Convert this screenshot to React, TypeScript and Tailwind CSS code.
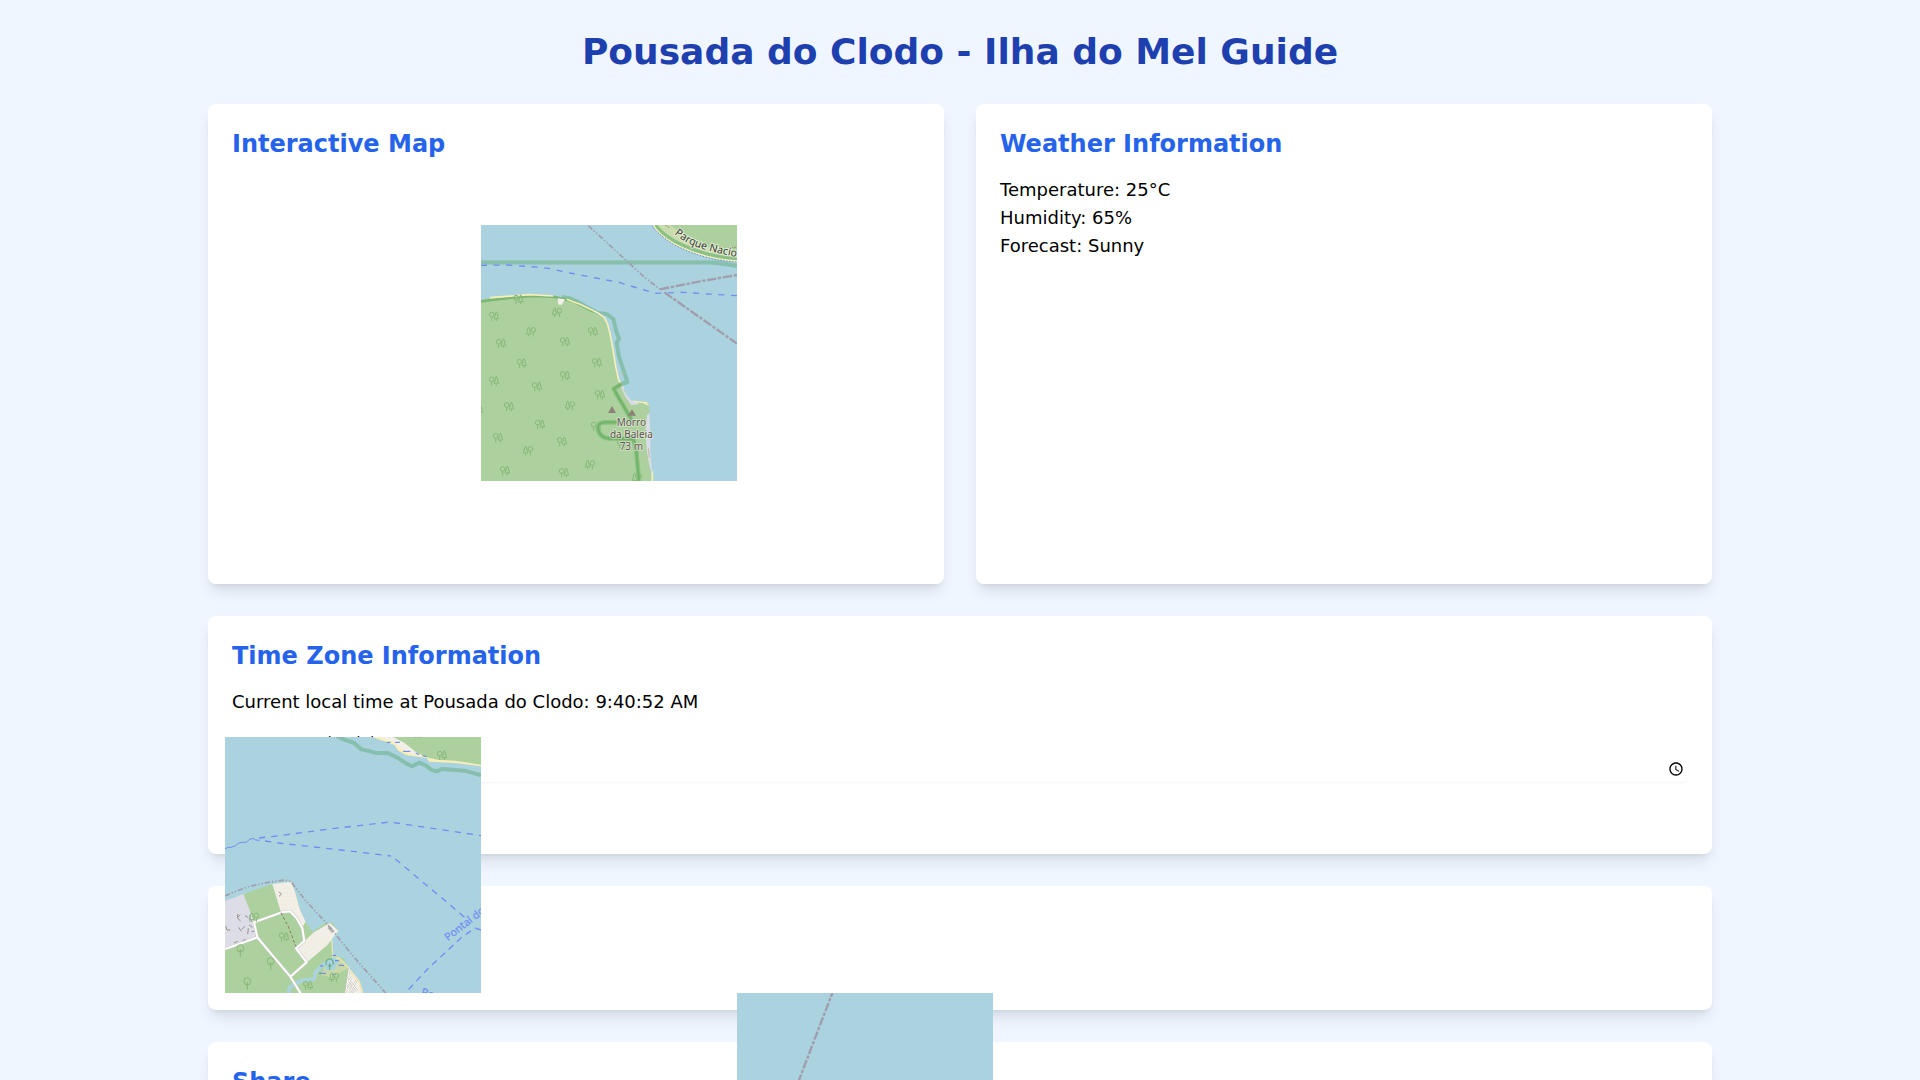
import type { ReactNode } from "react";

const headingClass = "text-2xl font-bold text-[#2563eb]";
const cardClass = "rounded-lg bg-white p-6 shadow-lg";

function Trees({ at, flip = false }: { at: [number, number][]; flip?: boolean }) {
  return (
    <g fill="none" stroke="#87b878" strokeWidth="3" strokeLinejoin="round">
      {at.map(([x, y]) => (
        <g key={`${x}-${y}`} transform={`translate(${x} ${y}) scale(${flip ? -1 : 1} 1)`}>
          <circle cx="-7" cy="-4" r="7" />
          <path d="M-7 3V15M7 -13L2 -3H4L0 8H14L10 -3H12ZM7 8V15" />
        </g>
      ))}
    </g>
  );
}

function RoundTrees({ at }: { at: [number, number][] }) {
  return (
    <g fill="none" stroke="#87b878" strokeWidth="3">
      {at.map(([x, y]) => (
        <path key={`${x}-${y}`} d={`M${x} ${y + 22}V${y - 2}M${x - 5} ${y + 5}H${x + 5}M${x - 10} ${y - 4}a10 11 0 1 0 20 0a10 11 0 1 0 -20 0`} />
      ))}
    </g>
  );
}

function Tile({ viewBox, className, children }: { viewBox: string; className: string; children: ReactNode }) {
  return (
    <svg
      viewBox={viewBox}
      aria-hidden="true"
      className={`absolute z-10 h-64 w-64 max-w-none overflow-hidden bg-[#aad3df] ${className}`}
      fontFamily="'Noto Sans', sans-serif"
    >
      {children}
    </svg>
  );
}

function HeadlandTile() {
  const coast =
    "M33 255L60 249L140 242L180 239L250 243L290 252L330 268L380 292L402 306L412 325L420 355L430 410L437 455L446 495L460 522L478 552L490 558L530 560L538 572L538 600L531 612L530 650L538 700L540 760L548 798";
  return (
    <Tile viewBox="33 30 768 768" className="left-[249px] top-[49px]">
      <path d={`${coast}H33Z`} fill="#add19e" />
      <path d="M33 142H720Q760 144 801 153" fill="none" stroke="#86bfae" strokeWidth="13" />
      <path d="M33 137H760" stroke="#9bcabe" strokeWidth="3" strokeDasharray="3 3" />
      <path
        d="M275 246L300 250L330 264L350 276L385 294L410 297L430 312L438 345L447 372L440 383L447 425L457 455L472 501L450 509"
        fill="none"
        stroke="#86bfae"
        strokeWidth="12"
        strokeLinejoin="round"
      />
      <path d="M33 259L90 252L140 246L200 243L255 246L310 259L370 290" fill="none" stroke="#7cb872" strokeWidth="8" />
      <path d="M60 248L140 242L180 239L250 243M290 253L330 268L380 292L402 306L412 325L420 355L430 410L437 455L446 495L460 522" fill="none" stroke="#f7eeb9" strokeWidth="5" />
      <path d="M263 250L285 253L275 269H265Z" fill="#f2efe9" />
      <path d="M456 508L464 530L482 555L505 560L505 568L484 571L466 545L452 515Z" fill="#d9dae6" />
      <path d="M490 557L530 561L537 573L520 565L490 561Z" fill="#f7eeb9" />
      <path d="M531 600L538 595L541 650L541 710L545 760L549 772L546 774L538 750L530 705L527 645Z" fill="#dcdce6" />
      <path d="M452 478L467 475M535 700L538 728" stroke="#c0b9a0" strokeWidth="3" />
      <path d="M547 770V798" stroke="#f7eeb9" strokeWidth="5" />
      <Trees
        at={[
          [72, 303], [93, 384], [285, 379], [369, 349], [145, 252], [155, 444], [381, 442], [72, 497],
          [285, 481], [201, 514], [390, 538], [117, 574], [210, 627], [84, 667], [276, 679], [105, 766],
          [282, 772], [378, 633], [456, 685], [24, 584],
        ]}
      />
      <Trees flip at={[[183, 349], [261, 291], [300, 571], [174, 706], [360, 748], [501, 788]]} />
      <g fill="none" strokeLinejoin="round">
        <g stroke="#8fc283" strokeWidth="14">
          <path d="M455 507L431 521L440 538L474 596L486 617" />
          <path d="M440 622H405Q382 622 384 642Q390 671 425 671L490 672L499 710L507 798" />
        </g>
        <g stroke="#70b569" strokeWidth="7">
          <path d="M455 507L431 521L440 538L474 596L486 617" />
          <path d="M440 622H405Q382 622 384 642Q390 671 425 671L490 672L499 710L507 798" />
        </g>
      </g>
      <path d="M426 573L438 594H414ZM486 583L498 602H474Z" fill="#8d8178" />
      <g fontSize="30" textAnchor="middle" fill="#5e554d" stroke="#e4eadb" strokeWidth="5" strokeOpacity=".8" paintOrder="stroke">
        <text x="484" y="634">Morro</text>
        <text x="484" y="670">da Baleia</text>
        <text x="484" y="706">73 m</text>
      </g>
      <path d="M548 30Q560 52 610 84Q700 132 801 140V30Z" fill="#c9dcad" />
      <path d="M600 30L640 58L700 90L801 115V30Z" fill="#add19e" />
      <path d="M556 30Q580 65 640 92Q720 128 801 131" fill="none" stroke="#8bc185" strokeWidth="11" />
      <path d="M550 30Q562 55 612 86Q700 132 801 138" fill="none" stroke="#f7eeb9" strokeWidth="4" />
      <path d="M547 33Q560 55 610 88Q700 136 801 141" fill="none" stroke="#4d65c4" strokeWidth="3" strokeDasharray="3 6" />
      <path d="M585 30L600 39M775 98L801 97" stroke="#9b9072" strokeWidth="3" strokeDasharray="6 3" />
      <path id="park-label" d="M613 57Q655 92 712 106Q770 122 850 134" fill="none" />
      <text fontSize="32" fill="#34412f" stroke="#e9efdf" strokeWidth="6" strokeOpacity=".8" paintOrder="stroke">
        <textPath href="#park-label">Parque Nacion</textPath>
      </text>
      <g fill="none" stroke="#6f8df0" strokeWidth="4">
        <path d="M33 151L110 150L210 157L240 161L300 174L450 203L555 235L640 232L700 236L801 242" strokeDasharray="18 20" />
      </g>
      <g fill="none" stroke="#a19dad">
        <path d="M355 32L525 188L573 225" strokeWidth="5" strokeDasharray="16 6 4 6 4 6" />
        <path d="M570 223L690 199L801 180M583 232L801 386" strokeWidth="7" strokeDasharray="28 5 10 5" />
      </g>
    </Tile>
  );
}

function HarborTile() {
  return (
    <Tile viewBox="30 21 768 768" className="-left-[7px] top-[561px]">
      <path d="M470 21L515 36L538 45L550 62L575 76L635 84L642 95L720 99L798 109V21Z" fill="#f7eeb9" />
      <path d="M495 21L540 38L555 54L590 73L640 80V21Z" fill="#f2efe9" />
      <path d="M535 21L570 40L605 68L640 83L668 89L720 92L798 104V21Z" fill="#add19e" />
      <path
        d="M365 18L390 30L415 38L440 58L480 68L520 70L550 85L575 101L592 109L612 98L632 106L650 120L667 124L680 117L750 122L798 136"
        fill="none"
        stroke="#86bfae"
        strokeWidth="12"
        strokeLinejoin="round"
      />
      <path d="M515 37H527M540 37H555M564 64H586M602 70L612 73M622 77L635 80" stroke="#5f7de8" strokeWidth="3" />
      <path d="M598 22H604M610 22H615" stroke="#8fbf80" strokeWidth="3" />
      <Trees at={[[681, 75]]} />
      <g fill="none" stroke="#6f8df5" strokeWidth="4">
        <path d="M30 356L40 352L48 352L62 347L70 340L80 337L94 337L104 328L114 325L122 330L133 331" strokeWidth="3" />
        <path d="M132 324L200 316L360 295L525 276L610 289L700 302L798 317" strokeDasharray="19 18" />
        <path d="M150 333L190 339L360 358L528 378" strokeDasharray="19 18" />
        <path d="M541 387L612 447L700 520L760 572" strokeDasharray="19 17" />
        <path d="M798 600L780 594L740 622L640 715L568 792" strokeDasharray="19 15" />
      </g>
      <g transform="translate(0 390)">
        <path
          d="M30 122L60 112L85 102L172 72L228 65L240 95L255 150L272 185L292 215L330 190L352 188L370 212L350 235L355 285L385 295L403 325L430 360L445 400H30Z"
          fill="#add19e"
        />
        <path d="M30 122L60 112L85 102L118 187L127 232L30 264Z" fill="#dddde8" />
        <path d="M172 72L228 65L240 95L255 150L272 185L262 202L242 166L225 152L198 157Z" fill="#f2efe9" />
        <path d="M243 265L269 243L297 217L345 189L370 212L337 255L278 305Z" fill="#f2efe9" />
        <g fill="none" stroke="#efe6bb" strokeWidth="3" strokeDasharray="3 8">
          <path d="M186 85H232M193 97H236M192 109H240M195 121H244M201 133H248M205 145H250M248 167L262 185" />
          <path d="M262 260L335 208M258 272L345 218M266 282L345 230M275 292L340 244" />
        </g>
        <path d="M355 290L372 292L402 324L350 352L318 345L330 318Z" fill="#c9d8a8" />
        <path d="M350 240L354 292L372 294L402 324" fill="none" stroke="#e9e4b5" strokeWidth="4" />
        <path d="M403 325L430 358L443 400H390Z" fill="#f2efe9" />
        <path d="M405 335L432 366L442 398" fill="none" stroke="#f1e7b7" strokeWidth="6" />
        <path d="M220 400L224 382L258 362L298 358L302 335L330 310L355 300" fill="none" stroke="#aad3df" strokeWidth="11" strokeLinejoin="round" />
        <path d="M335 305L355 290L372 302L358 330L330 332Z" fill="#aad3df" />
        <path d="M353 286H363M360 302H372M315 318H325M371 316H387M352 343H362M312 340H333" stroke="#5f7de8" strokeWidth="3" />
        <g fill="none" strokeLinejoin="round">
          <g stroke="#c9c9c4" strokeWidth="9">
            <path d="M30 267L127 232L117 187L200 157L226 154L245 175L262 205L268 243L243 265L275 307L226 350" />
            <path d="M127 232L226 350L257 400" />
          </g>
          <g stroke="#fff" strokeWidth="6">
            <path d="M30 267L127 232L117 187L200 157L226 154L245 175L262 205L268 243L243 265L275 307L226 350" />
            <path d="M127 232L226 350L257 400" />
          </g>
        </g>
        <path d="M403 325L392 400M400 360L426 392M410 350L398 374M425 360L404 398M402 377L416 398" fill="none" stroke="#c4c1ba" strokeWidth="6" />
        <path d="M403 325L392 400M400 360L426 392M410 350L398 374M425 360L404 398M402 377L416 398" fill="none" stroke="#fff" strokeWidth="3" />
        <path d="M198 158L220 200L243 260" fill="none" stroke="#857b66" strokeWidth="3" strokeDasharray="9 6" />
        <path
          d="M32 198L36 210H46M68 162V174L77 184M68 172L76 164M90 167L100 173M105 165V185M71 202L79 214M80 208L90 199M100 205L98 222M110 215L118 213M57 249L68 244M83 242L92 238M102 195L113 202M192 95L199 103L192 109"
          fill="none"
          stroke="#9b9388"
          strokeWidth="3"
        />
        <path d="M341 201L354 216" stroke="#b9b7b1" strokeWidth="10" />
        <path d="M30 108L60 95L100 80L160 67L210 60L228 65L270 120L335 190L420 295L512 399" fill="none" stroke="#a19dad" strokeWidth="5" strokeDasharray="16 6 4 6 4 6" />
        <Trees at={[[207, 230], [279, 375]]} />
        <Trees flip at={[[357, 351], [117, 171]]} />
        <RoundTrees at={[[76, 269], [167, 308], [97, 368]]} />
        <path d="M344 330V310M338 318H350M334 315a11 13 0 1 1 20 0" fill="none" stroke="#70b08a" strokeWidth="4" />
        <g fontSize="32" fill="#6f8df5" stroke="#6f8df5" strokeWidth="0.6">
          <text transform="translate(699 244) rotate(-38)">Pontal do</text>
          <text transform="translate(617 406) rotate(14)">Pontal</text>
        </g>
      </g>
    </Tile>
  );
}

function OpenSeaTile() {
  return (
    <Tile viewBox="51 39 768 768" className="left-[505px] top-[817px]">
      <path d="M337 39L237 300L150 530" fill="none" stroke="#a19dad" strokeWidth="7" strokeDasharray="26 5 10 5" strokeDashoffset="14" />
    </Tile>
  );
}

export default function App() {
  return (
    <div className="min-h-screen bg-[#eff6ff] font-['DejaVu_Sans',sans-serif] text-black">
      <main className="mx-auto max-w-screen-2xl px-4 py-8">
        <h1 className="mb-8 text-center text-4xl font-bold text-[#1e40af]">Pousada do Clodo - Ilha do Mel Guide</h1>
        <div className="grid grid-cols-1 gap-8 md:grid-cols-2">
          <section className={cardClass}>
            <h2 className={`mb-4 ${headingClass}`}>Interactive Map</h2>
            <div className="relative h-96">
              <HeadlandTile />
              <HarborTile />
              <OpenSeaTile />
            </div>
          </section>
          <section className={cardClass}>
            <h2 className={`mb-4 ${headingClass}`}>Weather Information</h2>
            <div className="text-lg">
              <p>Temperature: 25°C</p>
              <p>Humidity: 65%</p>
              <p>Forecast: Sunny</p>
            </div>
          </section>
        </div>
        <section className={`mt-8 ${cardClass}`}>
          <h2 className={`mb-4 ${headingClass}`}>Time Zone Information</h2>
          <p className="text-lg">Current local time at Pousada do Clodo: 9:40:52 AM</p>
          <div className="mt-4 mb-12">
            <label htmlFor="local-time" className="block text-sm font-medium">
              Convert your local time:
            </label>
            <input id="local-time" type="time" className="mt-1 block h-[26px] w-full rounded-md shadow-xs" />
          </div>
        </section>
        <section className={`mt-8 min-h-[124px] ${cardClass}`} />
        <section className={`mt-8 ${cardClass}`}>
          <h2 className={headingClass}>Share</h2>
        </section>
      </main>
    </div>
  );
}
